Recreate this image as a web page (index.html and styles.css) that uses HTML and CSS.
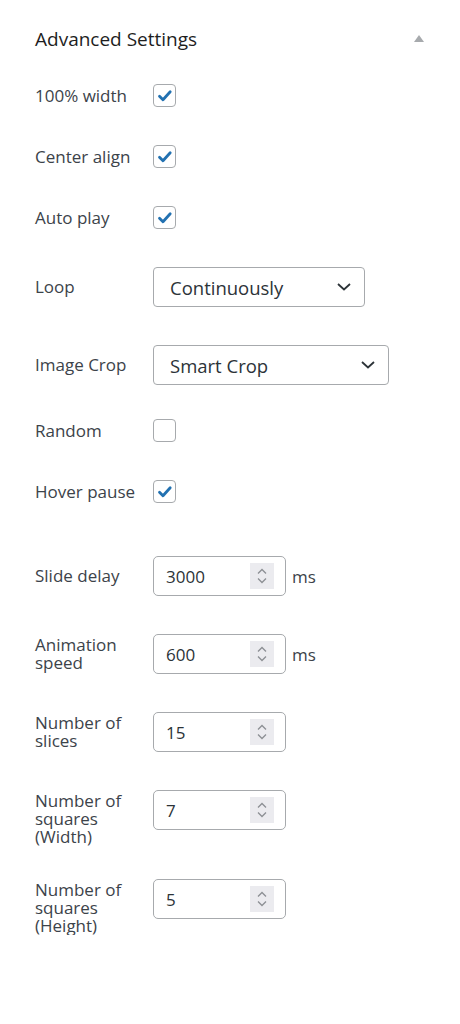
FILE: index.html
```html
<!DOCTYPE html>
<html>
<head>
<meta charset="utf-8">
<link rel="stylesheet" href="styles.css">
</head>
<body>
<div class="panel">
  <div class="header">
    <h2 class="title">Advanced Settings</h2>
    <span class="toggle"></span>
  </div>
  <div class="rows">
    <div class="row">
      <span class="label">100% width</span>
      <span class="cb checked"><svg viewBox="0 0 22 22" width="22" height="22"><path d="M5.5 11.2 L9 14.8 L16.2 6.8" fill="none" stroke="#2271b1" stroke-width="2.8" stroke-linecap="round" stroke-linejoin="round"/></svg></span>
    </div>
    <div class="row">
      <span class="label">Center align</span>
      <span class="cb checked"><svg viewBox="0 0 22 22" width="22" height="22"><path d="M5.5 11.2 L9 14.8 L16.2 6.8" fill="none" stroke="#2271b1" stroke-width="2.8" stroke-linecap="round" stroke-linejoin="round"/></svg></span>
    </div>
    <div class="row">
      <span class="label">Auto play</span>
      <span class="cb checked"><svg viewBox="0 0 22 22" width="22" height="22"><path d="M5.5 11.2 L9 14.8 L16.2 6.8" fill="none" stroke="#2271b1" stroke-width="2.8" stroke-linecap="round" stroke-linejoin="round"/></svg></span>
    </div>
    <div class="row">
      <span class="label">Loop</span>
      <div class="select loop">
        <span class="sel-text">Continuously</span>
        <svg class="chev" viewBox="0 0 14 8" width="14" height="8"><path d="M1 1 L7 6.5 L13 1" fill="none" stroke="#2c3338" stroke-width="1.8"/></svg>
      </div>
    </div>
    <div class="row">
      <span class="label">Image Crop</span>
      <div class="select crop">
        <span class="sel-text">Smart Crop</span>
        <svg class="chev" viewBox="0 0 14 8" width="14" height="8"><path d="M1 1 L7 6.5 L13 1" fill="none" stroke="#2c3338" stroke-width="1.8"/></svg>
      </div>
    </div>
    <div class="row tight">
      <span class="label">Random</span>
      <span class="cb"></span>
    </div>
    <div class="row">
      <span class="label">Hover pause</span>
      <span class="cb checked"><svg viewBox="0 0 22 22" width="22" height="22"><path d="M5.5 11.2 L9 14.8 L16.2 6.8" fill="none" stroke="#2271b1" stroke-width="2.8" stroke-linecap="round" stroke-linejoin="round"/></svg></span>
    </div>
    <div class="row num-row first-num">
      <span class="label">Slide delay</span>
      <div class="num"><span class="num-val">3000</span><span class="spin"><svg viewBox="0 0 12 20" width="12" height="20"><path d="M2 7.5 L6 3.5 L10 7.5 M2 12.5 L6 16.5 L10 12.5" fill="none" stroke="#8c8f94" stroke-width="1.3"/></svg></span></div>
      <span class="unit">ms</span>
    </div>
    <div class="row num-row">
      <span class="label">Animation speed</span>
      <div class="num"><span class="num-val">600</span><span class="spin"><svg viewBox="0 0 12 20" width="12" height="20"><path d="M2 7.5 L6 3.5 L10 7.5 M2 12.5 L6 16.5 L10 12.5" fill="none" stroke="#8c8f94" stroke-width="1.3"/></svg></span></div>
      <span class="unit">ms</span>
    </div>
    <div class="row num-row">
      <span class="label">Number of slices</span>
      <div class="num"><span class="num-val">15</span><span class="spin"><svg viewBox="0 0 12 20" width="12" height="20"><path d="M2 7.5 L6 3.5 L10 7.5 M2 12.5 L6 16.5 L10 12.5" fill="none" stroke="#8c8f94" stroke-width="1.3"/></svg></span></div>
    </div>
    <div class="row num-row top">
      <span class="label">Number of squares (Width)</span>
      <div class="num"><span class="num-val">7</span><span class="spin"><svg viewBox="0 0 12 20" width="12" height="20"><path d="M2 7.5 L6 3.5 L10 7.5 M2 12.5 L6 16.5 L10 12.5" fill="none" stroke="#8c8f94" stroke-width="1.3"/></svg></span></div>
    </div>
    <div class="row num-row top last">
      <span class="label">Number of squares (Height)</span>
      <div class="num"><span class="num-val">5</span><span class="spin"><svg viewBox="0 0 12 20" width="12" height="20"><path d="M2 7.5 L6 3.5 L10 7.5 M2 12.5 L6 16.5 L10 12.5" fill="none" stroke="#8c8f94" stroke-width="1.3"/></svg></span></div>
    </div>
  </div>
</div>
</body>
</html>
```

FILE: styles.css
```css
html, body {
  margin: 0;
  padding: 0;
  background: #ffffff;
}

body {
  font-family: "Open Sans", "Noto Sans", "Liberation Sans", sans-serif;
  color: #3c434a;
  width: 460px;
}

.panel {
  padding: 24px 0 0 35px;
}

.header {
  display: flex;
  align-items: center;
  justify-content: space-between;
  padding-right: 36px;
  height: 30px;
}

.title {
  margin: 0;
  font-size: 19px;
  font-weight: 400;
  color: #1e1e1e;
}

.toggle {
  width: 0;
  height: 0;
  border-left: 5px solid transparent;
  border-right: 5px solid transparent;
  border-bottom: 7px solid #a7aaad;
  margin-top: -2px;
}

.rows {
  display: flex;
  flex-direction: column;
  gap: 38px;
  margin-top: 30px;
}

.row {
  display: flex;
  align-items: center;
}

.row.tight {
  margin-top: -4px;
}

.row.first-num {
  margin-top: 15px;
}

.row.top {
  align-items: flex-start;
}

.row.last {
  margin-top: -5px;
}

.label {
  box-sizing: border-box;
  width: 118px;
  padding-right: 12px;
  flex: none;
  font-size: 17px;
  line-height: 18px;
  color: #3c434a;
}

.row.top .label {
  padding-top: 2px;
}

.cb {
  box-sizing: border-box;
  width: 23px;
  height: 23px;
  border: 1.5px solid #a7aaad;
  border-radius: 4px;
  display: flex;
  align-items: center;
  justify-content: center;
  background: #fff;
}

.cb svg {
  display: block;
  flex: none;
}

.select {
  box-sizing: border-box;
  height: 40px;
  border: 1.5px solid #a7aaad;
  border-radius: 4px;
  display: flex;
  align-items: center;
  justify-content: space-between;
  padding: 0 13px 0 16px;
  background: #fff;
}

.select.loop {
  width: 212px;
}

.select.crop {
  width: 236px;
}

.sel-text {
  font-size: 18.5px;
  color: #2c3338;
}

.chev {
  display: block;
}

.num {
  box-sizing: border-box;
  width: 133px;
  height: 40px;
  border: 1.5px solid #a7aaad;
  border-radius: 5px;
  display: flex;
  align-items: center;
  justify-content: space-between;
  padding: 0 11px 0 12px;
  background: #fff;
}

.num-val {
  font-size: 17px;
  color: #2c3338;
}

.spin {
  width: 24px;
  height: 26px;
  background: #ebebef;
  display: flex;
  align-items: center;
  justify-content: center;
}

.spin svg {
  display: block;
}

.unit {
  font-size: 17px;
  color: #3c434a;
  margin-left: 6px;
}
```
